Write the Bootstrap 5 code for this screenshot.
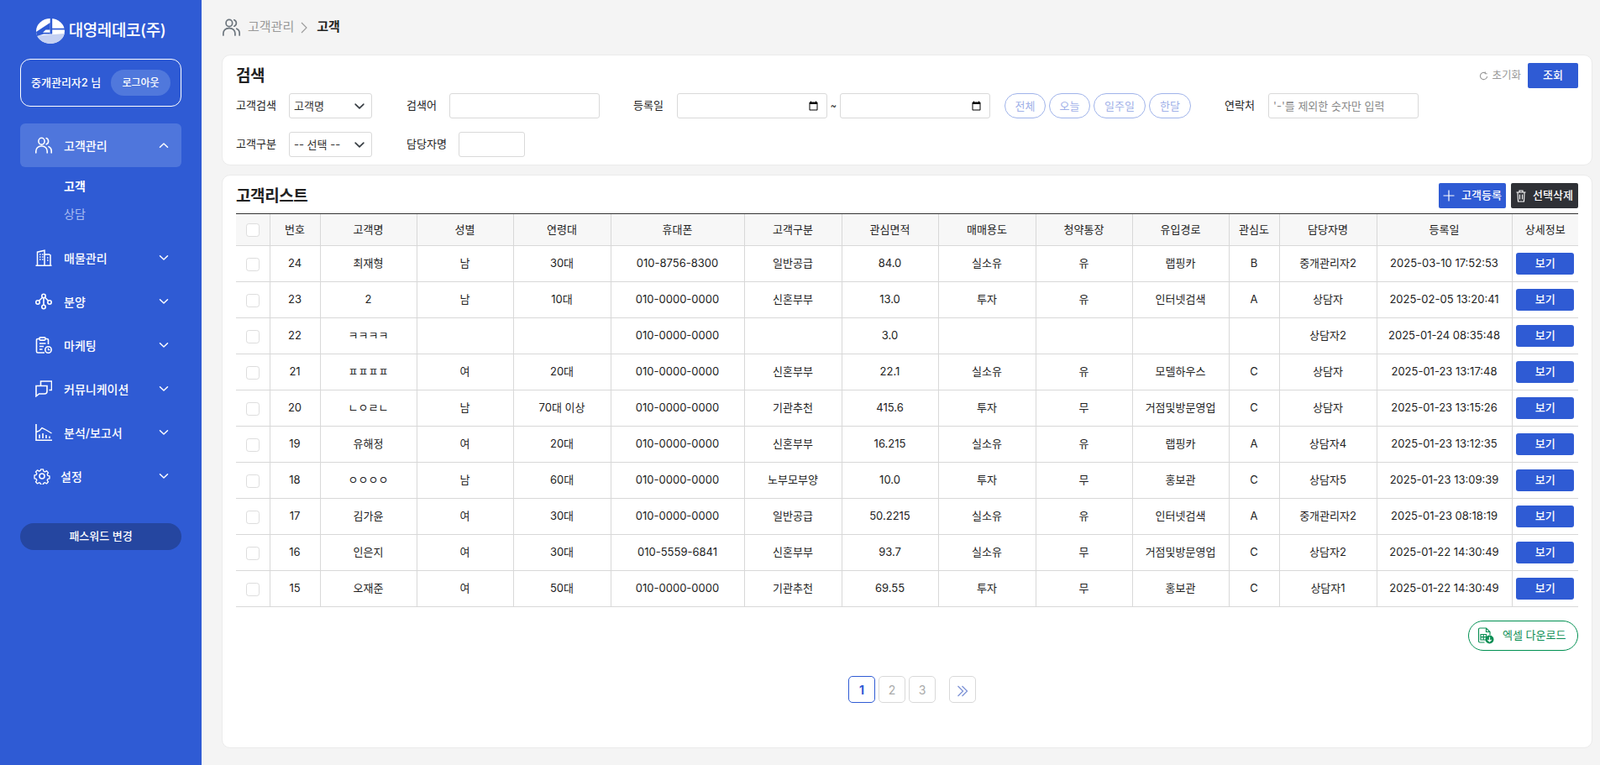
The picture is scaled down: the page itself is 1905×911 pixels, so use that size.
<!DOCTYPE html>
<html lang="ko">
<head>
  <meta charset="UTF-8" />
  <meta name="viewport" content="width=device-width, initial-scale=1.0"/>
  <title>고객</title>
  <link href="https://cdn.jsdelivr.net/npm/bootstrap@5.3.3/dist/css/bootstrap.min.css" rel="stylesheet">
  <style>
    html, body { height: 100%; }
    body {
      background: #f4f4f4;
      font-family: Inter, "Noto Sans CJK KR", sans-serif;
      font-size: 13px;
      color: #222;
      overflow: hidden;
    }
    .app-wrap { height: 911px; }
    /* sidebar */
    .side-bar { width: 240px; background: #2f5bd4; color: #fff; padding: 0 24px; flex-shrink: 0; }
    .logo-row { height: 70px; padding-top: 4px; gap: 5px; font-size: 19px; font-weight: 500; letter-spacing: -.4px; }
    .user-box { height: 57px; border: 1px solid #fff; border-radius: 12px; padding: 0 12px; font-size: 13px; font-weight: 500; margin-bottom: 20px; }
    .logout-pill { width: 71px; height: 31px; border-radius: 16px; background: #5078dc; color: #fff; font-size: 12px; font-weight: 500; border: 0; padding: 0; }
    .menu-item { height: 52px; padding: 0 18px; color: #fff; font-size: 14px; font-weight: 500; border-radius: 6px; text-decoration: none; }
    .menu-item.is-open { background: #4f76dc; }
    .menu-item svg.ico { width: 20px; height: 20px; margin-right: 14px; flex-shrink: 0; }
    .menu-item.ico-wide svg.ico { margin-left: -2px; margin-right: 12px; }
    .menu-item svg.chev { width: 12px; height: 12px; margin-left: auto; margin-right: -3px; }
    .sub-menu { padding: 6px 0 10px 52px; font-size: 14px; line-height: 33px; }
    .sub-menu a { display: block; color: #a9bdf0; text-decoration: none; }
    .sub-menu a.is-on { color: #fff; font-weight: 700; }
    .pass-pill { height: 32px; margin-top: 30px; border-radius: 16px; background: #2546a0; color: #fff; font-size: 13px; font-weight: 500; border: 0; width: 100%; }
    /* main */
    .main-area { padding: 0 9px 20px 24px; min-width: 0; }
    .crumb-row { height: 65px; padding-left: 1px; gap: 9px; color: #999; font-size: 15px; }
    .crumb-row strong { color: #222; font-weight: 700; margin-left: 1px; }
    .panel { background: #fff; border: 1px solid #ebebeb; border-radius: 10px; padding: 9px 16px; }
    .panel-list { margin-top: 11px; }
    .panel-title { font-size: 19px; font-weight: 700; margin: 0; padding-top: 3px; color: #222; letter-spacing: -.4px; }
    .head-row { height: 30px; }
    .search-line { height: 30px; margin-top: 16px; }
    .search-line.first-line { margin-top: 6px; }
    .field-lbl { font-size: 13px; }
    .lbl-a { width: 63px; }
    .lbl-b { width: 51px; }
    .lbl-c { width: 62px; }
    .lbl-d { width: 52px; }
    .ctl { height: 30px; border: 1px solid #d9d9d9; border-radius: 3px; font-size: 13px; padding: 0 5px; color: #333; background-color: #fff; outline: 0; }
    .ctl::placeholder { color: #888; }
    .ctl[type=date] { padding-right: 7px; }
    .ctl[type=date]::-webkit-datetime-edit { opacity: 0; }
    .ctl-sel { width: 99px; padding-right: 24px; min-height: 0; line-height: 1; background-position: right 5px center; background-size: 18px 13px; box-shadow: none; }
    .ctl-md { width: 179px; }
    .ctl-sm { width: 79px; }
    .gap-a { margin-left: 41px; }
    .gap-b { margin-left: 40px; }
    .gap-c { margin-left: 17px; }
    .gap-d { margin-left: 40px; }
    .tilde { width: 15px; text-align: center; font-size: 11px; }
    .range-row { gap: 4px; }
    .range-pill { height: 30px; width: 49px; padding: 0; border: 1px solid #9fb3ea; border-radius: 15px; background: #fff; color: #a0b0e8; font-size: 13px; line-height: 1; }
    .pill-wide { width: 62px; }
    .pill-last { width: 50px; }
    .reset-lnk { color: #999; font-size: 12.5px; gap: 4px; }
    .act-btn { height: 30px; border-radius: 2px; color: #fff; font-size: 13px; font-weight: 500; border: 0; padding: 0; background: #2f5bd4; }
    .w-60 { width: 60px; }
    .w-80 { width: 80px; }
    .act-dark { background: #2f3136; }
    .btn-pair { gap: 6px; }
    /* table */
    .list-table { table-layout: fixed; width: 1598px; border-collapse: collapse; margin: 6px 0 0; }
    .list-table th, .list-table td { height: 43px; padding: 0; border: 0; border-bottom: 1px solid #d8d8d8; border-left: 1px solid #d8d8d8; text-align: center; vertical-align: middle; font-size: 13px; font-weight: 400; color: #222; background: transparent; box-shadow: none; }
    .list-table th { height: 38px; background: #f7f7f7; border-top: 1px solid #333; }
    .list-table th:first-child, .list-table td:first-child { border-left: 0; }
    .chk { width: 16px; height: 16px; margin: 0; border: 1px solid #ddd; border-radius: 3px; vertical-align: middle; }
    .view-btn { width: 69px; height: 26px; border-radius: 3px; background: #2f5bd4; color: #fff; border: 0; padding: 0; font-size: 13px; font-weight: 500; }
    .excel-btn { width: 131px; height: 36px; margin-top: 16px; border: 1px solid #009051; border-radius: 18px; background: #fff; color: #0d8f55; font-size: 13px; padding: 0 0 0 10px; gap: 10px; }
    .pager-row { margin-top: 30px; margin-left: 12px; gap: 4px; }
    .pg-box { width: 32px; height: 32px; border: 1px solid #d9d9d9; border-radius: 5px; background: #fff; color: #aaa; font-size: 14px; padding: 0; }
    .pg-box.is-on { border-color: #2f5bd4; color: #2f5bd4; font-weight: 700; }
    .pg-next { margin-left: 12px; }
  </style>
</head>
<body>

<svg width="0" height="0" class="position-absolute">
  <symbol id="i-users" viewBox="0 0 20 20" fill="none" stroke="currentColor" stroke-width="1.6" stroke-linecap="round">
    <ellipse cx="7.5" cy="5.2" rx="3.6" ry="3.9"/>
    <path d="M.8 19v-2a6 6 0 0 1 6-6h1.4a6 6 0 0 1 6 6v2"/>
    <path d="M13.2 1.6a3.9 3.9 0 0 1 0 7.2M16 11.6a5.6 5.6 0 0 1 3.2 5.2V19"/>
  </symbol>
  <symbol id="i-chev-down" viewBox="0 0 12 12" fill="none" stroke="currentColor" stroke-width="1.5" stroke-linecap="round" stroke-linejoin="round">
    <path d="M1.5 3.8 6 8l4.500-4.200"/>
  </symbol>
  <symbol id="i-chev-up" viewBox="0 0 12 12" fill="none" stroke="currentColor" stroke-width="1.5" stroke-linecap="round" stroke-linejoin="round">
    <path d="M1.500 8.200 6 4l4.500 4.200"/>
  </symbol>
</svg>

<div class="d-flex app-wrap">
  <!-- Sidebar -->
  <aside class="side-bar">
    <div class="logo-row d-flex align-items-center justify-content-center">
      <svg width="34" height="30" viewBox="0 0 34 30">
        <ellipse cx="17" cy="15" rx="17" ry="15" fill="#fff"/>
        <path d="M1.200 20.500 33.700 18A17 15 0 0 1 1.200 20.500z" fill="#c5d1f2"/>
        <path d="M0 16 16.700 5v13.500H9L1 21z" fill="#2f5bd4"/>
        <path d="M11.500 13.500h5.200v3.200H8z" fill="#fff"/>
        <rect x="16.700" y="0" width="2.500" height="18.500" fill="#2f5bd4"/>
        <rect x="19" y="11.700" width="15" height="1.700" fill="#2f5bd4"/>
      </svg>
      <span>대영레데코(주)</span>
    </div>

    <div class="user-box d-flex align-items-center justify-content-between">
      <span>중개관리자2 님</span>
      <button class="logout-pill" type="button">로그아웃</button>
    </div>

    <a class="menu-item is-open d-flex align-items-center" href="#">
      <svg class="ico"><use href="#i-users"/></svg>고객관리
      <svg class="chev"><use href="#i-chev-up"/></svg>
    </a>
    <div class="sub-menu">
      <a class="is-on" href="#">고객</a>
      <a href="#">상담</a>
    </div>

    <a class="menu-item d-flex align-items-center" href="#">
      <svg class="ico" viewBox="0 0 20 20" fill="none" stroke="currentColor" stroke-width="1.500">
        <path d="M.500 19.200h19M2.500 19V3.200l8.500-2V19M11 6h5.500l1.500 1v12"/>
        <path d="M5 6h1.500M8 6h1.500M5 9h1.500M8 9h1.500M5 12h1.500M8 12h1.500M14 10h1.500M14 13h1.500"/>
      </svg>매물관리
      <svg class="chev"><use href="#i-chev-down"/></svg>
    </a>
    <a class="menu-item d-flex align-items-center" href="#">
      <svg class="ico" viewBox="0 0 20 20" fill="none" stroke="currentColor" stroke-width="1.600">
        <circle cx="10" cy="3.500" r="2.200"/><circle cx="3" cy="11" r="2.200"/><circle cx="17" cy="11" r="2.200"/><circle cx="10" cy="16.500" r="2.200"/>
        <path d="M10 5.800v8.500M8.600 5.200 4.400 9.300M11.400 5.200l4.200 4.100"/>
      </svg>분양
      <svg class="chev"><use href="#i-chev-down"/></svg>
    </a>
    <a class="menu-item d-flex align-items-center" href="#">
      <svg class="ico" viewBox="0 0 20 20" fill="none" stroke="currentColor" stroke-width="1.600">
        <path d="M11 19H3a1.500 1.500 0 0 1-1.500-1.500V4A1.500 1.500 0 0 1 3 2.500h1.800M12.200 2.500H14A1.500 1.500 0 0 1 15.500 4v5"/>
        <rect x="5" y=".9" width="7" height="3.200" rx="1"/>
        <path d="M5 8h7.500M5 11.500h5M5 15h3.500"/>
        <circle cx="15.500" cy="15.500" r="3.700"/>
        <path d="M15.500 13.500v2.200h2" stroke-width="1.300"/>
      </svg>마케팅
      <svg class="chev"><use href="#i-chev-down"/></svg>
    </a>
    <a class="menu-item d-flex align-items-center" href="#">
      <svg class="ico" viewBox="0 0 20 20" fill="none" stroke="currentColor" stroke-width="1.600">
        <path d="M6.500 6V1h13v10.500h-3"/>
        <path d="M14 6.500H1v12.300l3.500-2.800H11c2 0 3-1 3-3z"/>
      </svg>커뮤니케이션
      <svg class="chev"><use href="#i-chev-down"/></svg>
    </a>
    <a class="menu-item d-flex align-items-center" href="#">
      <svg class="ico" viewBox="0 0 20 20" fill="none" stroke="currentColor" stroke-width="1.600">
        <path d="M1 0v19.200h19"/>
        <path d="M1 9.500 5 8l3-3.500 3 1.500 3.500 2 5 3" stroke-width="1.400"/>
        <path d="M5 17v-4.500M9 17v-6M13 17v-4M17 17v-2.500"/>
      </svg>분석/보고서
      <svg class="chev"><use href="#i-chev-down"/></svg>
    </a>
    <a class="menu-item ico-wide d-flex align-items-center" href="#">
      <svg class="ico" viewBox="0 0 20 20" fill="none" stroke="currentColor" stroke-width="1.500" stroke-linejoin="round">
        <circle cx="10" cy="10" r="3"/>
        <path d="M8.400 1h3.200l.5 2.600 1.700.8 2.300-1.300 2.200 2.300-1.400 2.200.7 1.700 2.400.6v3.200l-2.400.6-.7 1.700 1.400 2.200-2.200 2.300-2.300-1.300-1.700.7-.5 2.100H8.400l-.5-2.100-1.700-.7-2.300 1.300-2.200-2.300 1.400-2.200-.7-1.700-2.400-.6V8.900l2.400-.6.7-1.700-1.400-2.200 2.200-2.300 2.300 1.300 1.700-.8z" transform="translate(1 1) scale(.9)"/>
      </svg>설정
      <svg class="chev"><use href="#i-chev-down"/></svg>
    </a>

    <button class="pass-pill" type="button">패스워드 변경</button>
  </aside>

  <!-- Main -->
  <main class="main-area flex-grow-1 d-flex flex-column">
    <div class="crumb-row d-flex align-items-center">
      <svg width="21" height="21" class="text-secondary"><use href="#i-users"/></svg>
      <span class="d-flex align-items-center gap-2">고객관리
        <svg width="9" height="14" viewBox="0 0 9 14" fill="none" stroke="#999" stroke-width="1.100"><path d="M1 1l6 6-6 6"/></svg>
      </span>
      <strong>고객</strong>
    </div>

    <!-- Search -->
    <section class="panel">
      <div class="head-row d-flex align-items-center justify-content-between">
        <h2 class="panel-title">검색</h2>
        <div class="d-flex align-items-center gap-2">
          <span class="reset-lnk d-flex align-items-center">
            <svg width="11" height="11" viewBox="0 0 12 12" fill="none" stroke="#999" stroke-width="1.200"><path d="M10.500 6.500A4.500 4.500 0 1 1 8.500 2.200M8 .5v2.500h2.500"/></svg>초기화
          </span>
          <button class="act-btn w-60" type="button">조회</button>
        </div>
      </div>
      <div class="search-line first-line d-flex align-items-center">
        <label class="field-lbl lbl-a">고객검색</label>
        <select class="form-select ctl ctl-sel"><option>고객명</option></select>
        <label class="field-lbl lbl-b gap-a">검색어</label>
        <input class="ctl ctl-md" type="text">
        <label class="field-lbl lbl-d gap-b">등록일</label>
        <input class="ctl ctl-md" type="date" aria-label="시작일">
        <span class="tilde">~</span>
        <input class="ctl ctl-md" type="date" aria-label="종료일">
        <div class="d-flex range-row gap-c">
          <button class="range-pill" type="button">전체</button>
          <button class="range-pill" type="button">오늘</button>
          <button class="range-pill pill-wide" type="button">일주일</button>
          <button class="range-pill pill-last" type="button">한달</button>
        </div>
        <label class="field-lbl lbl-d gap-d">연락처</label>
        <input class="ctl ctl-md" type="text" placeholder="'-'를 제외한 숫자만 입력">
      </div>
      <div class="search-line d-flex align-items-center">
        <label class="field-lbl lbl-a">고객구분</label>
        <select class="form-select ctl ctl-sel"><option>-- 선택 --</option></select>
        <label class="field-lbl lbl-c gap-a">담당자명</label>
        <input class="ctl ctl-sm" type="text">
      </div>
    </section>

    <!-- List -->
    <section class="panel panel-list flex-grow-1">
      <div class="head-row d-flex align-items-center justify-content-between">
        <h2 class="panel-title">고객리스트</h2>
        <div class="d-flex btn-pair">
          <button class="act-btn w-80 d-flex align-items-center justify-content-center gap-2" type="button">
            <svg width="14" height="14" viewBox="0 0 14 14" stroke="#fff" stroke-width="1.200"><path d="M7 .5v13M.5 7h13"/></svg>고객등록
          </button>
          <button class="act-btn act-dark w-80 d-flex align-items-center justify-content-center gap-2" type="button">
            <svg width="12" height="15" viewBox="0 0 12 15" fill="none" stroke="#fff" stroke-width="1.100"><path d="M.5 3h11M4 3V1h4v2M2 3l.5 11h7L10 3M4.500 5.500v6M7.500 5.500v6"/></svg>선택삭제
          </button>
        </div>
      </div>

      <table class="table list-table">
        <colgroup id="cols"></colgroup>
        <thead>
          <tr>
            <th><input class="form-check-input chk" type="checkbox" aria-label="전체 선택"></th>
            <th>번호</th><th>고객명</th><th>성별</th><th>연령대</th><th>휴대폰</th><th>고객구분</th><th>관심면적</th><th>매매용도</th><th>청약통장</th><th>유입경로</th><th>관심도</th><th>담당자명</th><th>등록일</th><th>상세정보</th>
          </tr>
        </thead>
        <tbody id="rows"></tbody>
      </table>

      <div class="d-flex justify-content-end">
        <button class="excel-btn d-flex align-items-center" type="button">
          <svg width="20" height="20" viewBox="0 0 20 20" fill="none" stroke="#0d8f55" stroke-width="1.200">
            <path d="M8.500 18H3a1.500 1.500 0 0 1-1.500-1.500v-14A1.500 1.500 0 0 1 3 1h7.500L15 5.500V9"/>
            <path d="M10.500 1v4.500H15"/>
            <path d="M4 8.500h6.500V15H4zM7.200 8.500V15M4 11.700h6"/>
            <circle cx="14.500" cy="14.500" r="5" fill="#0d8f55" stroke="none"/>
            <path d="M14.500 11.500v5.500M12.300 14.800l2.200 2.200 2.200-2.200" stroke="#fff"/>
          </svg>
          엑셀 다운로드
        </button>
      </div>

      <div class="pager-row d-flex justify-content-center">
        <button class="pg-box is-on" type="button">1</button>
        <button class="pg-box" type="button">2</button>
        <button class="pg-box" type="button">3</button>
        <button class="pg-box pg-next" type="button" aria-label="다음">
          <svg width="14" height="14" viewBox="0 0 14 14" fill="none" stroke="#7e93d6" stroke-width="1.300"><path d="M1.500 1l6 6-6 6M6.500 1l6 6-6 6"/></svg>
        </button>
      </div>
    </section>
  </main>
</div>

<script src="https://cdn.jsdelivr.net/npm/bootstrap@5.3.3/dist/js/bootstrap.bundle.min.js"></script>
<script>
  const colWidths = [40, 60, 115, 115, 116, 159, 116, 115, 116, 115, 115, 60, 116, 161, 79];
  document.getElementById('cols').innerHTML = colWidths.map(w => '<col style="width:' + w + 'px">').join('');

  const customers = [
    ['24', '최재형', '남', '30대', '010-8756-8300', '일반공급', '84.0', '실소유', '유', '랩핑카', 'B', '중개관리자2', '2025-03-10 17:52:53'],
    ['23', '2', '남', '10대', '010-0000-0000', '신혼부부', '13.0', '투자', '유', '인터넷검색', 'A', '상담자', '2025-02-05 13:20:41'],
    ['22', 'ㅋㅋㅋㅋ', '', '', '010-0000-0000', '', '3.0', '', '', '', '', '상담자2', '2025-01-24 08:35:48'],
    ['21', 'ㅍㅍㅍㅍ', '여', '20대', '010-0000-0000', '신혼부부', '22.1', '실소유', '유', '모델하우스', 'C', '상담자', '2025-01-23 13:17:48'],
    ['20', 'ㄴㅇㄹㄴ', '남', '70대 이상', '010-0000-0000', '기관추천', '415.6', '투자', '무', '거점및방문영업', 'C', '상담자', '2025-01-23 13:15:26'],
    ['19', '유해정', '여', '20대', '010-0000-0000', '신혼부부', '16.215', '실소유', '유', '랩핑카', 'A', '상담자4', '2025-01-23 13:12:35'],
    ['18', 'ㅇㅇㅇㅇ', '남', '60대', '010-0000-0000', '노부모부양', '10.0', '투자', '무', '홍보관', 'C', '상담자5', '2025-01-23 13:09:39'],
    ['17', '김가윤', '여', '30대', '010-0000-0000', '일반공급', '50.2215', '실소유', '유', '인터넷검색', 'A', '중개관리자2', '2025-01-23 08:18:19'],
    ['16', '인은지', '여', '30대', '010-5559-6841', '신혼부부', '93.7', '실소유', '무', '거점및방문영업', 'C', '상담자2', '2025-01-22 14:30:49'],
    ['15', '오재준', '여', '50대', '010-0000-0000', '기관추천', '69.55', '투자', '무', '홍보관', 'C', '상담자1', '2025-01-22 14:30:49']
  ];

  document.getElementById('rows').innerHTML = customers.map(function(row) {
    const cells = row.map(v => '<td>' + v + '</td>').join('');
    return '<tr><td><input class="form-check-input chk" type="checkbox" aria-label="선택"></td>' + cells +
      '<td><button class="view-btn" type="button">보기</button></td></tr>';
  }).join('');
</script>

</body>
</html>
